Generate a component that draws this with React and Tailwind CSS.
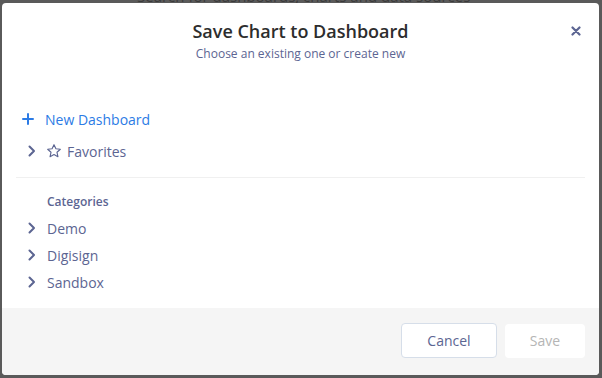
import React from "react";

const Chevron = () => (
  <svg width="8" height="12" viewBox="0 0 8 12" className="shrink-0">
    <path d="M1.5 1.5 L6 6 L1.5 10.5" fill="none" stroke="#5c6592" strokeWidth="2" strokeLinecap="round" strokeLinejoin="round" />
  </svg>
);

const Star = () => (
  <svg width="16" height="16" viewBox="0 0 24 24" className="shrink-0">
    <path
      d="M12 2.5l2.9 6.2 6.6.7-5 4.5 1.4 6.6L12 17.2l-5.9 3.3 1.4-6.6-5-4.5 6.6-.7z"
      fill="none"
      stroke="#5c6592"
      strokeWidth="1.7"
      strokeLinejoin="round"
    />
  </svg>
);

export default function App() {
  return (
    <div
      className="relative w-[602px] h-[378px] overflow-hidden bg-[#5a5a5a]"
      style={{ fontFamily: '"Open Sans", "Noto Sans", sans-serif' }}
    >
      <div className="absolute left-[137px] top-[-14px] text-[15px] leading-[20px] text-[#3a3a3a]">
        Search for dashboards, charts and data sources
      </div>
      <div className="relative ml-[2px] mt-[3px] w-[597px] h-[372px] bg-white rounded-[4px] flex flex-col overflow-hidden">
        <div className="relative flex flex-col items-center pt-[15px]">
          <div className="text-[18px] font-semibold text-[#2d2d2d] leading-[26px]">Save Chart to Dashboard</div>
          <div className="text-[12px] text-[#5c6592] leading-[18px] mt-[1px]">Choose an existing one or create new</div>
          <svg className="absolute right-[18px] top-[23px]" width="10" height="10" viewBox="0 0 10 10">
            <path d="M1.5 1.5 L8.5 8.5 M8.5 1.5 L1.5 8.5" stroke="#5c6592" strokeWidth="2.2" strokeLinecap="round" />
          </svg>
        </div>

        <div className="flex flex-col mt-[46px] px-[14px]">
          <div className="flex items-center h-[20px] pl-[6px]">
            <svg width="12" height="12" viewBox="0 0 12 12" className="shrink-0">
              <path d="M6 1 V11 M1 6 H11" stroke="#2c7be5" strokeWidth="2" strokeLinecap="round" />
            </svg>
            <span className="ml-[11px] text-[14px] text-[#2c7be5]">New Dashboard</span>
          </div>
          <div className="flex items-center h-[20px] mt-[12px] pl-[12px]">
            <Chevron />
            <span className="ml-[10px]"><Star /></span>
            <span className="ml-[5px] text-[14px] text-[#5c6592]">Favorites</span>
          </div>
          <div className="h-px bg-[#f0f0f0] mt-[16px]" />
          <div className="pl-[31px] mt-[15px] text-[12px] font-semibold text-[#5c6592] leading-[18px]">Categories</div>
          <div className="flex flex-col mt-[7px] gap-[7px]">
            {["Demo", "Digisign", "Sandbox"].map((n) => (
              <div key={n} className="flex items-center h-[20px] pl-[12px]">
                <Chevron />
                <span className="ml-[11px] text-[14px] text-[#5c6592]">{n}</span>
              </div>
            ))}
          </div>
        </div>

        <div className="mt-auto h-[67px] bg-[#f5f5f5] flex items-center justify-end gap-[8px] pr-[14px] pb-[2px]">
          <button className="w-[96px] h-[35px] bg-white border border-[#d6dee9] rounded-[4px] text-[14px] text-[#5c6592]">
            Cancel
          </button>
          <button className="w-[80px] h-[34px] bg-white rounded-[4px] text-[14px] text-[#b5b5b5]">Save</button>
        </div>
      </div>
    </div>
  );
}
